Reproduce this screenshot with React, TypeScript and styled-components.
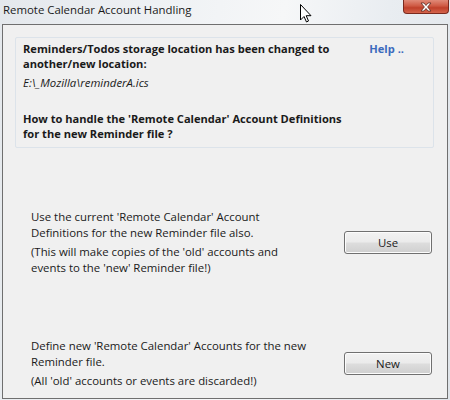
import styled, { createGlobalStyle } from "styled-components";

const GlobalStyle = createGlobalStyle`
  html, body {
    margin: 0;
    padding: 0;
  }
  body {
    width: 450px;
    height: 400px;
    overflow: hidden;
    font-family: "Open Sans", "Liberation Sans", sans-serif;
  }
`;

const Window = styled.div`
  position: relative;
  width: 450px;
  height: 400px;
  box-sizing: border-box;
  display: flex;
  flex-direction: column;
  padding: 0 2px 1px 2px;
  background: linear-gradient(100deg, #e4e8ec 0%, #eef1f4 30%, #f6f7f8 55%, #e9edf1 75%, #dfe4e9 100%);
`;

const TitleBar = styled.div`
  height: 24px;
  display: flex;
  align-items: center;
  justify-content: space-between;
`;

const Title = styled.div`
  font-family: "Open Sans", "Liberation Sans", sans-serif;
  font-size: 11.4px;
  color: #1a1a1a;
  padding-left: 1px;
  margin-top: -5px;
`;

const CloseButton = styled.div`
  align-self: flex-start;
  width: 46px;
  height: 14px;
  margin-right: -1px;
  box-sizing: border-box;
  border: 1px solid #7a2a1e;
  border-top: none;
  border-radius: 0 0 4px 4px;
  background: linear-gradient(#e08a78 0%, #cf5a44 45%, #c0402a 60%, #d4644c 100%);
  display: flex;
  align-items: center;
  justify-content: center;
`;

const Cursor = styled.svg`
  position: absolute;
  left: 300px;
  top: 4px;
`;

const Body = styled.div`
  flex: 1;
  box-sizing: border-box;
  border: 1px solid #6f6f6f;
  background: #f0f0f0;
  padding: 12px 13px 0 12px;
  display: flex;
  flex-direction: column;
`;

const InfoPanel = styled.div`
  height: 111px;
  box-sizing: border-box;
  border: 1px solid #dce3ea;
  border-radius: 2px;
  padding: 3px 7px 0 7px;
  display: flex;
  justify-content: space-between;
  font-size: 11.4px;
  color: #1a1a1a;
  line-height: 15px;
`;

const InfoText = styled.div`
  display: flex;
  flex-direction: column;
  white-space: nowrap;
`;

const Bold = styled.div`
  font-weight: 700;
  font-size: 11.1px;
`;

const Path = styled.div`
  font-style: italic;
  margin-top: 4px;
`;

const Question = styled(Bold)`
  margin-top: 21px;
`;

const HelpLink = styled.a`
  flex-shrink: 0;
  white-space: nowrap;
  font-weight: 700;
  font-size: 11.1px;
  color: #3c6bbd;
  margin-right: 22px;
  text-decoration: none;
  cursor: pointer;
`;

const Option = styled.div<{ $top: number }>`
  display: flex;
  align-items: center;
  justify-content: space-between;
  margin-top: ${(p) => p.$top}px;
  padding-left: 16px;
  padding-right: 2px;
`;

const OptionText = styled.div`
  font-size: 11.4px;
  line-height: 16px;
  color: #1a1a1a;
  white-space: nowrap;
`;

const Note = styled.div`
  margin-top: 3px;
`;

const Button = styled.button`
  width: 88px;
  height: 23px;
  box-sizing: border-box;
  border: 1px solid #707070;
  border-radius: 3px;
  background: linear-gradient(#f2f2f2 0%, #ebebeb 48%, #dddddd 52%, #cfcfcf 100%);
  font-family: "Open Sans", "Liberation Sans", sans-serif;
  font-size: 11.4px;
  color: #1a1a1a;
  padding: 0;
  box-shadow: inset 0 0 0 1px #fcfcfc;
`;

const App = () => {
  return (
    <Window>
      <GlobalStyle />
      <TitleBar>
        <Title>Remote Calendar Account Handling</Title>
        <CloseButton>
          <svg width="14" height="10" viewBox="0 0 14 10">
            <path
              d="M2 1 L5 1 L7 3.5 L9 1 L12 1 L8.6 5 L12 9 L9 9 L7 6.5 L5 9 L2 9 L5.4 5 Z"
              fill="#ffffff"
              stroke="#5a2a22"
              strokeWidth="0.8"
              strokeLinejoin="round"
            />
          </svg>
        </CloseButton>
      </TitleBar>
      <Cursor width="12" height="19" viewBox="0 0 12 19">
        <path
          d="M0.5 0.5 L0.5 16 L4 12.5 L6.5 18 L8.5 17 L6.2 11.7 L11 11.7 Z"
          fill="#ffffff"
          stroke="#000000"
          strokeWidth="1"
          strokeLinejoin="miter"
        />
      </Cursor>
      <Body>
        <InfoPanel>
          <InfoText>
            <Bold>
              Reminders/Todos storage location has been changed to
              <br />
              another/new location:
            </Bold>
            <Path>E:\_Mozilla\reminderA.ics</Path>
            <Question>
              How to handle the 'Remote Calendar' Account Definitions
              <br />
              for the new Reminder file ?
            </Question>
          </InfoText>
          <HelpLink>Help ..</HelpLink>
        </InfoPanel>

        <Option $top={61}>
          <OptionText>
            Use the current 'Remote Calendar' Account
            <br />
            Definitions for the new Reminder file also.
            <Note>
              (This will make copies of the 'old' accounts and
              <br />
              events to the 'new' Reminder file!)
            </Note>
          </OptionText>
          <Button>Use</Button>
        </Option>

        <Option $top={62}>
          <OptionText>
            Define new 'Remote Calendar' Accounts for the new
            <br />
            Reminder file.
            <Note>(All 'old' accounts or events are discarded!)</Note>
          </OptionText>
          <Button>New</Button>
        </Option>
      </Body>
    </Window>
  );
};

export default App;
